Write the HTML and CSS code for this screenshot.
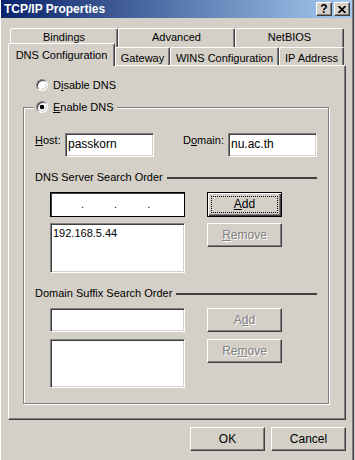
FILE: index.html
```html
<!DOCTYPE html>
<html lang="en">
<head>
    <meta charset="UTF-8">
    <title>TCP/IP Properties</title>
    <link rel="stylesheet" href="styles.css">
</head>
<body>
    <div class="window">
        <div class="titlebar">
            <span class="title">TCP/IP Properties</span>
            <div class="title-buttons">
                <span class="tbtn help">?</span>
                <span class="tbtn close">
                    <svg width="8" height="7" viewBox="0 0 8 7"><path d="M0.5 0 L7.5 7 M7.5 0 L0.5 7" stroke="#000" stroke-width="1.7" fill="none"/></svg>
                </span>
            </div>
        </div>

        <div class="client">
            <!-- two rows of tabs, front row holds the selected one -->
            <div class="tab-row back">
                <div class="tab w-bindings">Bindings</div>
                <div class="tab w-advanced">Advanced</div>
                <div class="tab w-netbios">NetBIOS</div>
            </div>
            <div class="tab-row front">
                <div class="tab selected w-dns">DNS Configuration</div>
                <div class="tab w-gateway">Gateway</div>
                <div class="tab w-wins">WINS Configuration</div>
                <div class="tab w-ip">IP Address</div>
            </div>

            <div class="panel">
                <div class="radio-row disable">
                    <span class="radio"></span>
                    <span>D<u>i</u>sable DNS</span>
                </div>

                <fieldset class="group">
                    <legend class="group-title"><span class="radio checked"></span><span><u>E</u>nable DNS</span></legend>

                    <div class="host-row">
                        <span class="field-label host-label"><u>H</u>ost:</span>
                        <div class="edit short">passkorn</div>
                        <span class="field-label domain-label">D<u>o</u>main:</span>
                        <div class="edit short">nu.ac.th</div>
                    </div>

                    <div class="subhead">
                        <span>DNS Server Search Order</span>
                        <span class="rule"></span>
                    </div>
                    <div class="order first">
                        <div class="edit ip"><span>.</span><span>.</span><span>.</span></div>
                        <button class="btn default"><span class="focus"><u>A</u>dd</span></button>
                        <div class="edit list">192.168.5.44</div>
                        <button class="btn disabled"><span><u>R</u>emove</span></button>
                    </div>

                    <div class="subhead">
                        <span>Domain Suffix Search Order</span>
                        <span class="rule"></span>
                    </div>
                    <div class="order second">
                        <div class="edit wide"></div>
                        <button class="btn disabled"><span>A<u>d</u>d</span></button>
                        <div class="edit list"></div>
                        <button class="btn disabled"><span>Re<u>m</u>ove</span></button>
                    </div>
                </fieldset>
            </div>

            <div class="dialog-buttons">
                <button class="btn">OK</button>
                <button class="btn">Cancel</button>
            </div>
        </div>
    </div>
</body>
</html>
```

FILE: styles.css
```css
body {
    margin: 0;
    background-color: #d4d0c8;
    font-family: "Liberation Sans", Arial, sans-serif;
    font-size: 11px;
    color: #000;
}
.window {
    width: 354px;
    height: 460px;
    box-sizing: border-box;
    border-left: 1px solid #fff;
    border-right: 1px solid #404040;
    box-shadow: inset -1px 0 #808080;
}
.titlebar {
    height: 18px;
    margin-right: 1px;
    padding: 0 2px 0 3px;
    display: flex;
    align-items: center;
    justify-content: space-between;
    background: linear-gradient(to right, #0a246a, #a6caf0);
    color: #fff;
    font-size: 12px;
    font-weight: bold;
}
.title-buttons {
    display: flex;
    gap: 2px;
}
.tbtn {
    width: 16px;
    height: 14px;
    box-sizing: border-box;
    display: flex;
    align-items: center;
    justify-content: center;
    background-color: #d4d0c8;
    border-top: 1px solid #fff;
    border-left: 1px solid #fff;
    border-right: 1px solid #404040;
    border-bottom: 1px solid #404040;
    box-shadow: inset -1px -1px #808080;
    color: #000;
    font-size: 12px;
    font-weight: bold;
    line-height: 12px;
}
.client {
    padding: 10px 0 0 7px;
}

/* tabs */
.tab-row {
    display: flex;
}
.tab-row.back {
    margin-left: 2px;
    height: 19px;
}
.tab-row.front {
    height: 18px;
    align-items: flex-end;
}
.tab {
    box-sizing: border-box;
    height: 100%;
    text-align: center;
    border-top: 1px solid #fff;
    border-left: 1px solid #fff;
    border-right: 1px solid #404040;
    border-radius: 2px 2px 0 0;
    box-shadow: inset -1px 0 #808080;
    background-color: #d4d0c8;
}
.tab-row.back .tab {
    line-height: 17px;
}
.tab-row.front .tab {
    padding-top: 3px;
    line-height: 14px;
}
.tab-row.front .tab.selected {
    position: relative;
    z-index: 1;
    height: 23px;
    margin-top: -4px;
    margin-bottom: -1px;
    padding-top: 4px;
}
.w-bindings { width: 108px; }
.w-advanced { width: 117px; }
.w-netbios { width: 109px; }
.w-dns { width: 107px; }
.w-gateway { width: 55px; }
.w-wins { width: 109px; }
.w-ip { width: 65px; }

.panel {
    width: 338px;
    box-sizing: border-box;
    padding: 12px 16px 15px 14px;
    border-top: 1px solid #fff;
    border-left: 1px solid #fff;
    border-right: 1px solid #404040;
    border-bottom: 1px solid #404040;
    box-shadow: inset -1px -1px #808080;
}

/* radio buttons */
.radio-row {
    display: flex;
    align-items: center;
    gap: 5px;
    height: 13px;
}
.radio-row.disable {
    margin-left: 13px;
}
.radio {
    display: inline-block;
    width: 12px;
    height: 12px;
    box-sizing: border-box;
    border-radius: 50%;
    border: 1px solid;
    border-color: #808080 #fff #fff #808080;
    box-shadow: inset 1px 1px #404040, inset -1px -1px #d4d0c8;
    background-color: #fff;
}
.radio.checked {
    background: radial-gradient(circle, #000 0, #000 2px, #fff 2.6px);
}

/* group box */
.group {
    margin: 10px 0 0;
    padding: 0 11px 15px;
    min-width: 0;
    border: 1px solid #808080;
    box-shadow: inset 1px 1px #fff, 1px 1px #fff;
}
.group-title {
    display: block;
    height: 13px;
    padding: 0 3px 0 2px;
    margin-left: -1px;
    font-size: 11px;
    line-height: 13px;
    white-space: nowrap;
    background-color: #d4d0c8;
}
.group-title .radio {
    vertical-align: -2px;
    margin-right: 5px;
}

.host-row {
    display: flex;
    align-items: flex-start;
    margin-top: 19px;
}
.field-label {
    padding-top: 1px;
    line-height: 13px;
}
.host-label { width: 30px; }
.domain-label { width: 45px; margin-left: 29px; }

/* sunken edit fields */
.edit {
    box-sizing: border-box;
    height: 24px;
    padding: 1px 2px;
    line-height: 19px;
    background-color: #fff;
    border-top: 1px solid #808080;
    border-left: 1px solid #808080;
    border-right: 1px solid #fff;
    border-bottom: 1px solid #fff;
    box-shadow: inset 1px 1px #404040, inset -1px -1px #d4d0c8;
}
.edit.short { width: 89px; font-size: 12px; }
.edit.list {
    height: 50px;
    line-height: 13px;
    padding-top: 3px;
}
.edit.ip {
    height: 25px;
    border: 1px solid #000;
    box-shadow: inset 1px 1px #404040;
    display: flex;
    gap: 30px;
    padding-left: 30px;
    line-height: 20px;
}

.subhead {
    display: flex;
    align-items: center;
    gap: 4px;
    margin-top: 14px;
    line-height: 13px;
}
.subhead .rule {
    flex: 1;
    height: 2px;
    background-color: #404040;
}

.order {
    display: grid;
    grid-template-columns: 135px 75px;
    column-gap: 22px;
    align-items: start;
    margin-left: 15px;
}
.order.first {
    margin-top: 8px;
    row-gap: 6px;
}
.order.second {
    margin-top: 8px;
    row-gap: 7px;
}
.order.second .list { height: 49px; }

/* push buttons */
.btn {
    width: 75px;
    height: 24px;
    padding: 0;
    font-family: "Liberation Sans", Arial, sans-serif;
    font-size: 12px;
    color: #000;
    background-color: #d4d0c8;
    border-top: 1px solid #fff;
    border-left: 1px solid #fff;
    border-right: 1px solid #404040;
    border-bottom: 1px solid #404040;
    border-radius: 0;
    box-shadow: inset -1px -1px #808080;
}
.btn.default {
    height: 25px;
    border: 1px solid #000;
    box-shadow: inset 1px 1px #fff, inset -1px -1px #404040, inset -2px -2px #808080;
    display: flex;
    padding: 3px;
}
.btn.default .focus {
    flex: 1;
    outline: 1px dotted #000;
    outline-offset: -1px;
    line-height: 17px;
}
.btn.disabled {
    color: #808080;
    text-shadow: 1px 1px #fff;
}

.dialog-buttons {
    width: 338px;
    display: flex;
    justify-content: flex-end;
    gap: 6px;
    margin-top: 7px;
}
```
